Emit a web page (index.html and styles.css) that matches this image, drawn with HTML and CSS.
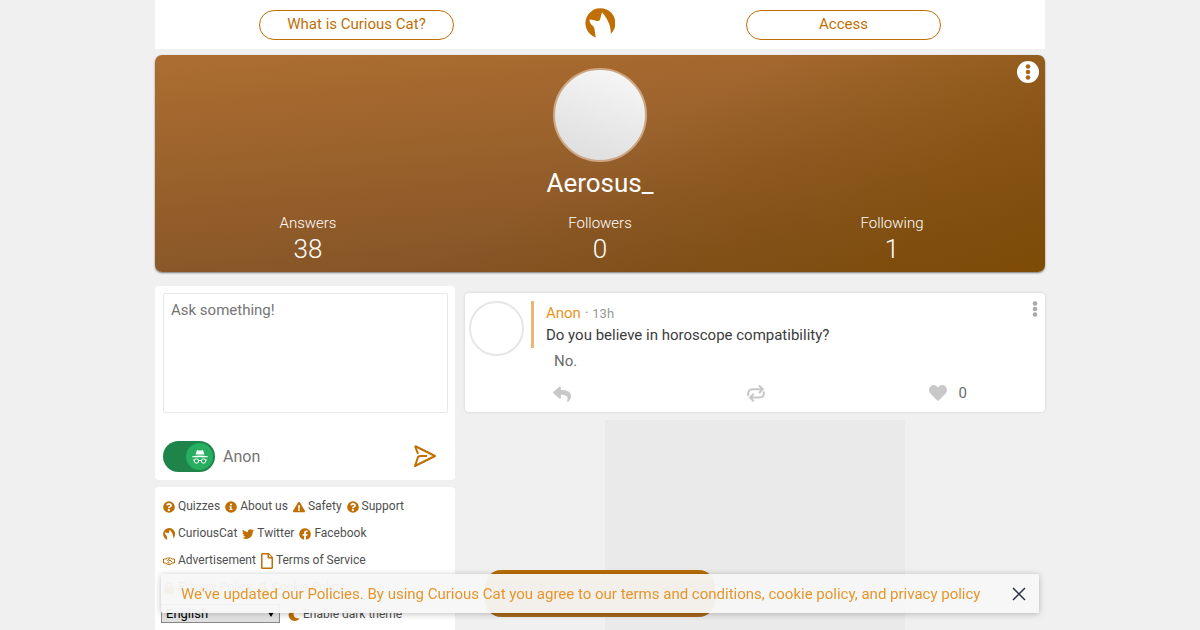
FILE: index.html
```
<!DOCTYPE html>
<html lang="en">
<head>
    <meta charset="UTF-8">
    <meta name="viewport" content="width=device-width, initial-scale=1.0">
    <title>Aerosus_ - Curious Cat</title>
    <link rel="stylesheet" href="styles.css">
</head>
<body>
    <svg class="sprite" aria-hidden="true">
        <symbol id="cat" viewBox="0 0 30 30">
            <path d="M11 29.500A15 15 0 1 1 25.800 26C26 19 24 15 21.500 10.500Q19 6 17 4.500C16 7 15.500 11 14.500 12.500C12 14 9 11.500 4.500 11.500C4.500 14 5.500 16.500 7.500 17.500C10.500 20 9.500 25 11 29.500Z"/>
        </symbol>
        <symbol id="question" viewBox="0 0 512 512">
            <path d="M504 256A248 248 0 1 1 8 256a248 248 0 0 1 496 0zM262 90c-54 0-89 23-116 64-4 5-2 12 3 16l35 26c5 4 12 3 16-2 18-23 30-36 57-36 21 0 46 13 46 33 0 15-12 23-33 34-24 13-55 30-55 71v4c0 7 5 12 12 12h58c7 0 12-5 12-12v-2c0-28 83-29 83-106 0-58-60-102-118-102zm-6 248a48 48 0 1 0 0 95 48 48 0 0 0 0-95z"/>
        </symbol>
        <symbol id="info" viewBox="0 0 512 512">
            <path d="M256 8a248 248 0 1 0 0 496 248 248 0 0 0 0-496zm0 95a45 45 0 1 1 0 90 45 45 0 0 1 0-90zm64 285h-128v-44h24v-72h-24v-48h88v120h40z"/>
        </symbol>
        <symbol id="warning" viewBox="0 0 576 512">
            <path d="M570 440c18 32-5 72-42 72H48c-37 0-60-40-42-72L246 24c19-32 65-32 84 0zM288 354a46 46 0 1 0 0 92 46 46 0 0 0 0-92zm-44-165 8 136c0 6 5 11 12 11h48c7 0 12-5 12-11l8-136c0-7-5-13-12-13h-64c-7 0-12 6-12 13z"/>
        </symbol>
        <symbol id="twitter" viewBox="0 0 512 512">
            <path d="M459 152c0 5 0 9 0 14 0 138-105 298-298 298-59 0-114-17-161-47 8 1 16 1 25 1 49 0 94-16 130-45-46-1-85-31-98-73 7 1 13 2 20 2 9 0 19-2 28-4-48-10-84-52-84-103v-1c14 8 30 13 47 13-28-19-46-50-46-87 0-19 5-37 14-53 52 64 129 105 216 110-2-8-3-16-3-24 0-58 47-105 105-105 30 0 58 13 77 33 24-5 46-13 66-25-8 24-24 45-46 58 21-2 42-8 61-16-15 21-33 40-53 54z"/>
        </symbol>
        <symbol id="facebook" viewBox="0 0 512 512">
            <path d="M504 256a248 248 0 1 0-287 245V328h-63v-72h63v-55c0-62 37-96 94-96 27 0 55 5 55 5v61h-31c-31 0-41 19-41 39v46h69l-11 72h-58v173a248 248 0 0 0 210-245z"/>
        </symbol>
        <symbol id="handshake" viewBox="0 0 24 16">
            <path d="M1 4h5l3-2h6l3 2h5M1 12h4l5 3h4l5-3h4M1 4v8M23 4v8M13 3 9 7q2 3 5-1l5 5M9 11l4 1" fill="none" stroke="currentColor" stroke-width="2"/>
        </symbol>
        <symbol id="file" viewBox="0 0 384 512">
            <path d="M370 120 264 14C255 5 243 0 230 0H48C22 0 0 22 0 48v416c0 27 22 48 48 48h288c27 0 48-21 48-48V154c0-13-5-25-14-34zM332 128h-76V52zM48 464V48h160v104c0 13 11 24 24 24h104v288z"/>
        </symbol>
        <symbol id="lock" viewBox="0 0 24 24">
            <path d="M5 10V7a7 7 0 0 1 14 0v3h2v14H3V10zm4 0h6V7a3 3 0 0 0-6 0z"/>
        </symbol>
        <symbol id="moon" viewBox="0 0 512 512">
            <path d="M283 512c79 0 151-36 198-95 7-8 0-21-11-19-124 24-238-71-238-197 0-72 39-139 101-174 10-6 8-20-3-22a256 256 0 1 0-47 507z"/>
        </symbol>
        <symbol id="dots" viewBox="0 0 6 16">
            <circle cx="3" cy="2.500" r="2.300"/>
            <circle cx="3" cy="8" r="2.300"/>
            <circle cx="3" cy="13.500" r="2.300"/>
        </symbol>
    </svg>

    <header class="topbar">
        <button class="pill" type="button">What is Curious Cat?</button>
        <a class="logo" href="#" aria-label="Curious Cat"><svg><use href="#cat"/></svg></a>
        <button class="pill" type="button">Access</button>
    </header>

    <main class="page">
        <section class="profile">
            <button class="profile-menu" type="button" aria-label="Options"><svg><use href="#dots"/></svg></button>
            <div class="avatar"></div>
            <h1>Aerosus_</h1>
            <div class="stats">
                <a href="#">Answers<strong>38</strong></a>
                <a href="#">Followers<strong>0</strong></a>
                <a href="#">Following<strong>1</strong></a>
            </div>
        </section>

        <div class="columns">
            <aside class="sidebar">
                <form class="ask card">
                    <textarea placeholder="Ask something!" aria-label="Ask something!"></textarea>
                    <div class="ask-bar">
                        <label class="anon">
                            <input type="checkbox" checked>
                            <span class="switch">
                                <span class="knob">
                                    <svg viewBox="0 0 16 16">
                                        <path d="M3.500 5.500 5 1q3 1 6 0l1.500 4.500z"/>
                                        <path d="M0 7.500q8-2 16 0v.8H0z"/>
                                        <circle cx="4.500" cy="12" r="2.200"/>
                                        <circle cx="11.500" cy="12" r="2.200"/>
                                        <path d="M1 11h1.500M6.800 11.500h2.400M13.500 11H15"/>
                                    </svg>
                                </span>
                            </span>
                            Anon
                        </label>
                        <button class="send" type="submit" aria-label="Send">
                            <svg viewBox="0 0 24 24"><path d="M2 1 22 11 2 21 5 12Q6 11 8 11H14M2 1 5 9"/></svg>
                        </button>
                    </div>
                </form>

                <nav class="links card">
                    <div class="links-row">
                        <a href="#"><svg><use href="#question"/></svg>Quizzes</a>
                        <a href="#"><svg><use href="#info"/></svg>About us</a>
                        <a href="#"><svg><use href="#warning"/></svg>Safety</a>
                        <a href="#"><svg><use href="#question"/></svg>Support</a>
                    </div>
                    <div class="links-row">
                        <a href="#"><svg><use href="#cat"/></svg>CuriousCat</a>
                        <a href="#"><svg><use href="#twitter"/></svg>Twitter</a>
                        <a href="#"><svg><use href="#facebook"/></svg>Facebook</a>
                    </div>
                    <div class="links-row">
                        <a href="#"><svg><use href="#handshake"/></svg>Advertisement</a>
                        <a href="#"><svg class="tall"><use href="#file"/></svg>Terms of Service</a>
                    </div>
                    <div class="links-row">
                        <a href="#"><svg><use href="#lock"/></svg>Privacy Policy</a>
                        <a href="#"><svg><use href="#lock"/></svg>Cookie Policy</a>
                    </div>
                    <div class="links-row settings">
                        <span class="language">
                            <select aria-label="Language">
                                <option>English</option>
                            </select>
                        </span>
                        <a href="#"><svg><use href="#moon"/></svg>Enable dark theme</a>
                    </div>
                </nav>
            </aside>

            <section class="feed">
                <article class="post card">
                    <div class="post-avatar"></div>
                    <div class="post-body">
                        <div class="question">
                            <p class="meta"><a href="#">Anon</a> · <time>13h</time></p>
                            <p>Do you believe in horoscope compatibility?</p>
                        </div>
                        <p class="answer">No.</p>
                        <div class="actions">
                            <button type="button" aria-label="Reply">
                                <svg viewBox="0 0 512 512"><path d="M8 226 184 74c16-13 40-2 40 19v80c161 2 288 34 288 186 0 61-39 122-83 154-14 10-33-3-28-19 45-146-22-185-177-187v88c0 21-24 32-40 19L8 262c-11-10-11-27 0-36z"/></svg>
                            </button>
                            <button type="button" aria-label="Repost">
                                <svg viewBox="0 0 24 24"><path d="M1.500 16Q1 7 7 7H21M16 2 21 7l-5 5M22.500 10Q23 18 17 18H4M9 13 4 18l5 5" fill="none" stroke="currentColor" stroke-width="2.800"/></svg>
                            </button>
                            <button type="button" aria-label="Like">
                                <svg viewBox="0 0 512 512"><path d="M462 62c-55-46-136-38-186 14l-20 20-20-20C187 24 105 16 50 62c-63 54-66 150-10 208l194 200c12 13 32 13 44 0l194-200c56-58 53-154-10-208z"/></svg>
                                <span>0</span>
                            </button>
                        </div>
                    </div>
                    <button class="post-menu" type="button" aria-label="Post options"><svg><use href="#dots"/></svg></button>
                </article>
                <div class="ad"></div>
            </section>
        </div>
    </main>

    <button class="floating" type="button" aria-label="Get started"></button>

    <div class="notice">
        <a href="#">We've updated our Policies. By using Curious Cat you agree to our terms and conditions, cookie policy, and privacy policy</a>
        <button type="button" aria-label="Close">
            <svg viewBox="0 0 14 14"><path d="M1 1 13 13M13 1 1 13"/></svg>
        </button>
    </div>
</body>
</html>
```
FILE: styles.css
```
:root {
    --accent: #bf6f04;
    --background: #f0f0f0;
    --text: #3c3c3c;
    --muted: #6b6b6b;
}

* {
    box-sizing: border-box;
}

body {
    margin: 0;
    background-color: var(--background);
    color: var(--text);
    font-family: Roboto, sans-serif;
    font-size: 15px;
    line-height: 22px;
}

a {
    color: inherit;
    text-decoration: none;
}

p,
h1 {
    margin: 0;
}

button {
    padding: 0;
    border: none;
    background: none;
    color: inherit;
    font: inherit;
    cursor: pointer;
}

svg {
    display: block;
    fill: currentColor;
}

.sprite {
    display: none;
}

.topbar,
.page {
    max-width: 890px;
    margin: 0 auto;
}

.topbar {
    display: flex;
    justify-content: center;
    gap: 131px;
    padding: 8px 0 9px;
    background-color: white;
    color: var(--accent);
}

.pill {
    width: 195px;
    height: 30px;
    margin-top: 2px;
    padding-bottom: 2px;
    border: 1px solid var(--accent);
    border-radius: 15px;
}

.logo svg {
    width: 30px;
    height: 30px;
}

.card {
    background-color: white;
    border-radius: 4px;
}

.profile {
    position: relative;
    margin-top: 6px;
    padding: 13px 7px 8px;
    border-radius: 7px;
    background: linear-gradient(150deg, rgba(125, 75, 0, 0) 50%, rgba(125, 75, 0, 0.85)), linear-gradient(175deg, #ad6e31, #7d4f24);
    box-shadow: 0 1px 2px rgba(0, 0, 0, 0.5);
    color: white;
    text-align: center;
}

.profile-menu {
    position: absolute;
    top: 6px;
    right: 6px;
    width: 22px;
    height: 22px;
    border-radius: 50%;
    background-color: white;
    color: #a5691c;
}

.profile-menu svg {
    width: 6px;
    height: 16px;
    margin: 0 auto;
}

.avatar {
    width: 94px;
    height: 94px;
    margin: 0 auto;
    border: 2px solid #cda783;
    border-radius: 50%;
    background: linear-gradient(200deg, #f8f8f8, #dcdcdc);
}

.profile h1 {
    margin-top: 6px;
    font-size: 26px;
    font-weight: 400;
    line-height: 30px;
}

.stats {
    display: flex;
    margin-top: 14px;
    font-weight: 300;
}

.stats a {
    flex: 1;
}

.stats strong {
    display: block;
    font-size: 26px;
    font-weight: 300;
    line-height: 30px;
}

.columns {
    display: flex;
    align-items: flex-start;
    gap: 10px;
    margin-top: 14px;
}

.sidebar {
    width: 300px;
}

.ask {
    padding: 7px 7px 8px 8px;
}

.ask textarea {
    display: block;
    width: 100%;
    height: 120px;
    padding: 5px 7px;
    border: 1px solid #e8e8e8;
    border-radius: 2px;
    font: inherit;
    resize: none;
}

.ask-bar {
    display: flex;
    justify-content: space-between;
    align-items: center;
    margin-top: 28px;
    padding-right: 11px;
}

.anon {
    display: flex;
    align-items: center;
    gap: 8px;
    color: #757575;
    font-size: 16px;
}

.anon input {
    position: absolute;
    opacity: 0;
}

.switch {
    display: flex;
    justify-content: flex-end;
    width: 52px;
    height: 31px;
    padding: 2px;
    border-radius: 16px;
    background-color: #1e8449;
}

.knob {
    display: flex;
    justify-content: center;
    align-items: center;
    width: 27px;
    height: 27px;
    border-radius: 50%;
    background-color: #27ae60;
    color: white;
}

.knob svg {
    width: 16px;
    height: 16px;
}

.knob circle,
.knob path:last-child {
    fill: none;
    stroke: white;
}

.send svg {
    width: 24px;
    height: 24px;
    fill: none;
    stroke: var(--accent);
    stroke-width: 2;
    stroke-linejoin: round;
}

.links {
    margin-top: 7px;
    padding: 5px 8px;
    color: #505050;
    font-size: 12px;
}

.links-row {
    display: flex;
    gap: 5px;
    height: 27px;
}

.links a {
    display: flex;
    align-items: center;
    gap: 3px;
}

.links svg {
    width: 12px;
    height: 12px;
    margin-top: 2px;
    color: var(--accent);
}

.links .tall {
    height: 16px;
}

.language {
    position: relative;
    width: 119px;
    margin: 4px 3px 0 -2px;
}

.language select {
    appearance: none;
    display: block;
    width: 100%;
    height: 19px;
    padding: 0 4px;
    border: 1px solid #888;
    border-radius: 0;
    background: linear-gradient(#f4f4f4, #dedede);
    color: black;
    font-family: Roboto, sans-serif;
    font-size: 13px;
}

.language::after {
    content: "";
    position: absolute;
    top: 8px;
    right: 6px;
    border: 3px solid transparent;
    border-top: 5px solid black;
    border-bottom: none;
    pointer-events: none;
}

.feed {
    flex: 1;
}

.post {
    position: relative;
    display: flex;
    margin-top: 7px;
    padding: 8px 4px;
    box-shadow: 0 0 3px rgba(0, 0, 0, 0.15);
}

.post-avatar {
    width: 55px;
    height: 55px;
    border: 2px solid #e6e6e6;
    border-radius: 50%;
}

.post-body {
    flex: 1;
    margin-left: 7px;
}

.question {
    padding: 1px 0 2px 12px;
    border-left: 3px solid #ecb772;
}

.meta {
    color: #999;
}

.meta a {
    color: #e8951c;
}

.meta time {
    font-size: 13px;
    line-height: 1;
}

.answer {
    margin: 2px 0 0 23px;
    color: var(--muted);
}

.actions {
    display: flex;
    align-items: center;
    justify-content: space-between;
    margin-top: 10px;
    padding: 0 74px 0 22px;
    color: #c8c8c8;
}

.actions button {
    display: flex;
    align-items: center;
    gap: 12px;
}

.actions button:nth-child(2) {
    padding-left: 12px;
}

.actions svg {
    width: 18px;
    height: 18px;
}

.actions span {
    color: var(--muted);
}

.post-menu {
    position: absolute;
    top: 8px;
    right: 7px;
    color: #aaa;
}

.post-menu svg {
    width: 6px;
    height: 16px;
}

.ad {
    max-width: 300px;
    height: 250px;
    margin: 8px auto;
    background-color: #eaeaea;
}

.floating {
    position: fixed;
    bottom: 13px;
    left: 50%;
    width: 230px;
    height: 47px;
    transform: translateX(-50%);
    border-radius: 16px;
    background: linear-gradient(#ba6f04, #a8681c);
}

.notice {
    position: fixed;
    bottom: 17px;
    left: 50%;
    display: flex;
    justify-content: space-between;
    align-items: center;
    width: calc(100% - 32px);
    max-width: 878px;
    padding: 9px 13px 8px 20px;
    transform: translateX(-50%);
    border-radius: 2px;
    background-color: rgba(247, 247, 247, 0.95);
    box-shadow: 0 1px 6px rgba(0, 0, 0, 0.25);
    color: #e5952c;
}

.notice svg {
    width: 14px;
    height: 14px;
    fill: none;
    stroke: #2c3444;
    stroke-width: 1.500;
}
```
